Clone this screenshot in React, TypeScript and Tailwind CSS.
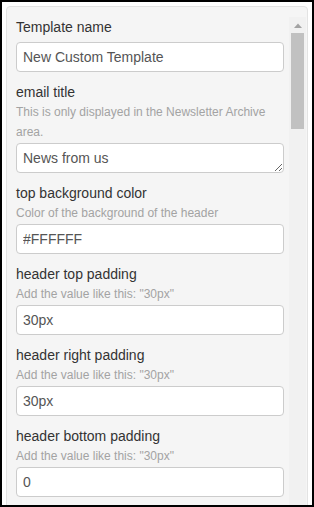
import { useState } from 'react'

type Field = {
  label: string
  help?: string
  value: string
  multiline?: boolean
}

const fields: Field[] = [
  { label: 'Template name', value: 'New Custom Template' },
  {
    label: 'email title',
    help: 'This is only displayed in the Newsletter Archive area.',
    value: 'News from us',
    multiline: true,
  },
  { label: 'top background color', help: 'Color of the background of the header', value: '#FFFFFF' },
  { label: 'header top padding', help: 'Add the value like this: "30px"', value: '30px' },
  { label: 'header right padding', help: 'Add the value like this: "30px"', value: '30px' },
  { label: 'header bottom padding', help: 'Add the value like this: "30px"', value: '0' },
]

const FormRow = ({ field }: { field: Field }) => {
  const [value, setValue] = useState(field.value)
  const inputClass =
    'block w-full h-[30px] rounded-[4px] border border-[#cccccc] bg-white px-[6px] text-[14px] leading-[20px] text-[#555555] outline-none'

  return (
    <div className="mb-[10px]">
      <label className={`block text-[14px] leading-[20px] text-[#333333] ${field.help ? '' : 'mb-[5px]'}`}>
        {field.label}
      </label>
      {field.help && <p className="mb-[1px] text-[12px] leading-[20px] text-[#a3a3a3]">{field.help}</p>}
      {field.multiline ? (
        <textarea
          value={value}
          onChange={(e) => setValue(e.target.value)}
          className={`${inputClass} py-[4px]`}
          rows={1}
        />
      ) : (
        <input value={value} onChange={(e) => setValue(e.target.value)} className={inputClass} />
      )}
    </div>
  )
}

export default function App() {
  return (
    <div
      className="h-[507px] w-[314px] overflow-hidden border-2 border-black bg-white px-[4px] pt-[4px]"
      style={{ fontFamily: '"Liberation Sans", Arial, sans-serif' }}
    >
      <div className="flex h-[540px] w-[302px] rounded-[4px] border border-[#e3e3e3] bg-[#f5f5f5] pt-[10px] pr-[1px]">
        {/* form fields */}
        <div className="w-[282px] pl-[9px] pr-[5px]">
          {fields.map((field) => (
            <FormRow key={field.label} field={field} />
          ))}
        </div>

        {/* scrollbar drawing */}
        <div className="flex w-[17px] flex-col bg-[#f1f1f1]">
          <div className="flex h-[16px] items-center justify-center">
            <svg width="8" height="5" viewBox="0 0 8 5">
              <polygon points="0,5 4,0.5 8,5" fill="#a3a3a3" />
            </svg>
          </div>
          <div className="mx-auto h-[96px] w-[13px] bg-[#c1c1c1]" />
        </div>
      </div>
    </div>
  )
}
